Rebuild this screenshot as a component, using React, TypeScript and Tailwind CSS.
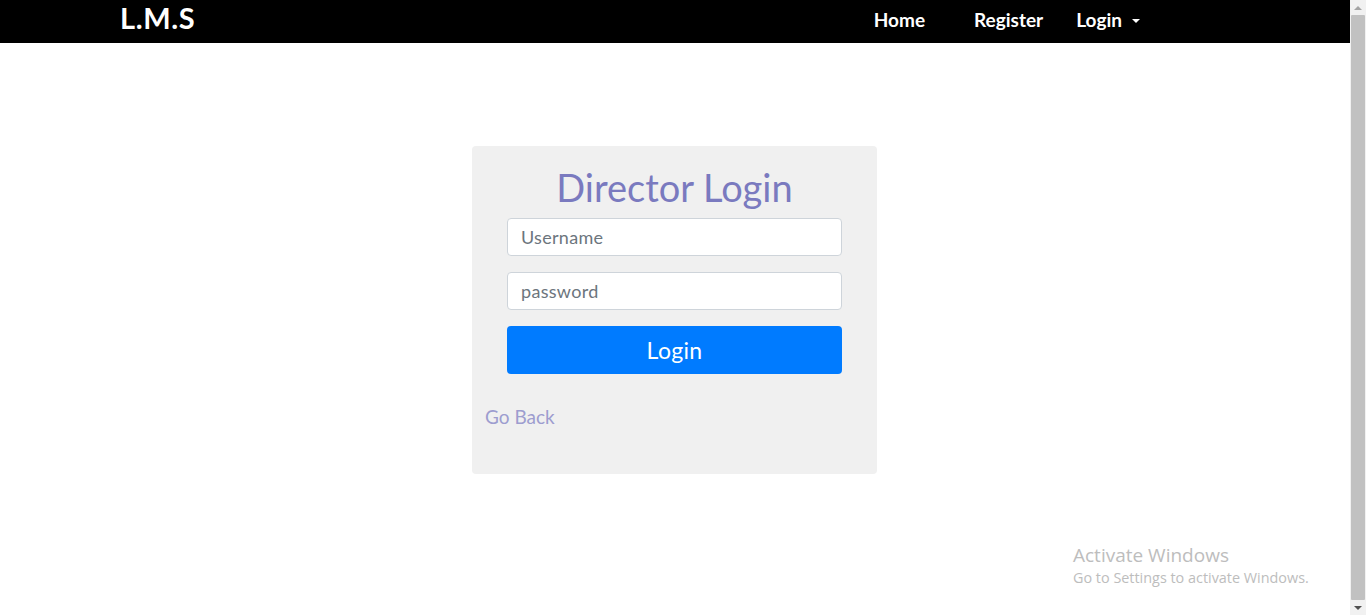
import React from 'react';

const font = { fontFamily: '"Lato", "Open Sans", sans-serif' };

const Navbar = () => {
  return (
    <nav className="bg-black h-[43px] flex items-start text-white">
      <a className="ml-[120px] mt-[1px] text-[29px] font-bold leading-[34px] tracking-[0.6px]">L.M.S</a>
      <div className="ml-auto mr-[210px] flex items-center h-[40px] text-[19px] font-bold">
        <a className="mr-[49px]">Home</a>
        <a className="mr-[33px]">Register</a>
        <a className="flex items-center">
          Login
          <span className="ml-[10px] mt-[1px] w-0 h-0 border-l-[4px] border-r-[4px] border-t-[4px] border-l-transparent border-r-transparent border-t-white" />
        </a>
      </div>
    </nav>
  );
};

const LoginCard = () => {
  return (
    <div className="ml-[472px] mt-[103px] w-[405px] bg-[#f0f0f0] rounded-[4px] pt-[20px] pb-[44px]">
      <h1 className="text-center text-[38px] leading-[43px] text-[#7a7abf] mb-[9px]">Director Login</h1>
      <form className="px-[35px] flex flex-col gap-[16px]">
        <input
          className="h-[38px] bg-white border border-[#ced4da] rounded-[4px] px-[13px] text-[18px] tracking-[0.3px] text-[#495057] placeholder:text-[#6c757d] outline-none"
          placeholder="Username"
        />
        <input
          className="h-[38px] bg-white border border-[#ced4da] rounded-[4px] px-[13px] text-[18px] tracking-[0.3px] text-[#495057] placeholder:text-[#6c757d] outline-none"
          placeholder="password"
          type="text"
        />
        <button type="button" className="h-[48px] bg-[#007bff] rounded-[4px] text-white text-[23px] tracking-[0.3px]">
          Login
        </button>
      </form>
      <a className="block mt-[29px] ml-[13px] text-[19px] leading-[27px] text-[#9d9dcf]">Go Back</a>
    </div>
  );
};

const Watermark = () => {
  return (
    <div
      className="absolute left-[1073px] top-[542px] text-[#bdbdbd]"
      style={{ fontFamily: '"Open Sans", "Noto Sans", sans-serif' }}
    >
      <div className="text-[19px] leading-[26px]">Activate Windows</div>
      <div className="text-[14.4px] leading-[20px]">Go to Settings to activate Windows.</div>
    </div>
  );
};

const Scrollbar = () => {
  return (
    <div className="w-[16px] h-full bg-[#f1f1f1] flex flex-col items-center">
      <div className="h-[15px] flex items-center justify-center">
        <span className="w-0 h-0 border-l-[4px] border-r-[4px] border-b-[4px] border-l-transparent border-r-transparent border-b-[#a3a3a3]" />
      </div>
      <div className="w-[14px] flex-1 bg-[#c1c1c1] rounded-[1px]" />
      <div className="h-[15px] flex items-center justify-center">
        <span className="w-0 h-0 border-l-[4px] border-r-[4px] border-t-[4px] border-l-transparent border-r-transparent border-t-[#505050]" />
      </div>
    </div>
  );
};

export default function App() {
  return (
    <div className="h-[615px] w-full flex overflow-hidden bg-white relative" style={font}>
      <div className="flex-1">
        <Navbar />
        <LoginCard />
      </div>
      <Scrollbar />
      <Watermark />
    </div>
  );
}
